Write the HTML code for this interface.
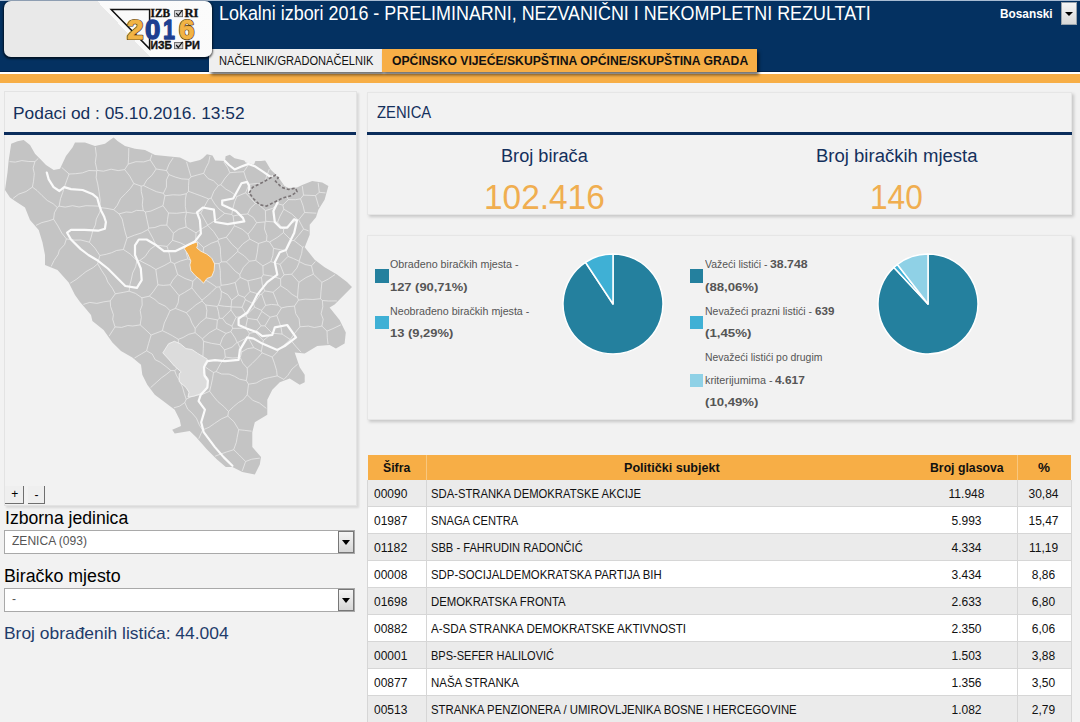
<!DOCTYPE html>
<html><head><meta charset="utf-8"><title>Lokalni izbori 2016</title>
<style>
html,body{margin:0;padding:0;}
body{width:1080px;height:722px;overflow:hidden;background:#f2f2f2;font-family:"Liberation Sans", sans-serif;position:relative;}
</style></head><body>
<div style="position:absolute;left:0px;top:0px;width:1080px;height:72px;background:#043161;"></div><div style="position:absolute;left:0px;top:71px;width:1080px;height:1px;background:#022145;"></div><div style="position:absolute;left:0px;top:0px;width:1080px;height:1px;background:#a9bcd3;"></div><div style="position:absolute;left:0px;top:72px;width:1080px;height:2px;background:#ffffff;"></div><div style="position:absolute;left:0px;top:74px;width:1080px;height:9px;background:#f7ae46;"></div><div style="position:absolute;top:3.07px;font-family:'Liberation Sans',sans-serif;font-size:20px;line-height:20px;color:#ffffff;font-weight:400;white-space:nowrap;left:219.4px;transform-origin:0 0;transform:translateX(0.00px) scaleX(0.8957);">Lokalni izbori 2016 - PRELIMINARNI, NEZVANIČNI I NEKOMPLETNI REZULTATI</div><div style="position:absolute;top:7.84px;font-family:'Liberation Sans',sans-serif;font-size:12px;line-height:12px;color:#ffffff;font-weight:700;white-space:nowrap;left:1000.4px;transform-origin:0 0;transform:translateX(0.00px) scaleX(0.9858);">Bosanski</div><div style="position:absolute;left:1061px;top:2px;width:14px;height:21px;border:1px solid #9aa4ad;background:linear-gradient(#f6f6f6,#d8d8d8);"></div><div style="position:absolute;left:1065px;top:12px;width:0;height:0;border-left:4px solid transparent;border-right:4px solid transparent;border-top:4px solid #000;"></div><div style="position:absolute;left:209px;top:49px;width:173px;height:23px;background:#efefef;box-shadow:2px 3px 3px rgba(0,0,0,0.55);"></div><div style="position:absolute;left:382px;top:49px;width:375px;height:23px;background:#f7ae46;box-shadow:2px 3px 3px rgba(0,0,0,0.55);"></div><div style="position:absolute;left:4px;top:1px;width:208px;height:56px;border-radius:7px;background:linear-gradient(46.6deg,#e9e9e9 0,#e9e9e9 56%,#fafafa 56%,#fbfbfb 100%);box-shadow:0 1px 2px 0.5px rgba(0,0,0,0.6);"></div><svg style="position:absolute;left:100px;top:0px" width="110" height="57" viewBox="100 0 110 57">
<path d="M111.2,9.4 L149.6,9.4 L149.6,48.8 Z" fill="none" stroke="#111" stroke-width="1.5" stroke-linejoin="miter"/>
<g stroke="#111" stroke-width="0.35">
<text x="150.6" y="16.8" font-family="Liberation Serif" font-weight="700" font-size="12.4" fill="#111" textLength="19.6" lengthAdjust="spacingAndGlyphs">IZB</text>
<text x="184.4" y="16.8" font-family="Liberation Serif" font-weight="700" font-size="12.4" fill="#111" textLength="14" lengthAdjust="spacingAndGlyphs">RI</text>
<text x="150.6" y="48.9" font-family="Liberation Sans" font-weight="700" font-size="10" fill="#111" textLength="21.4" lengthAdjust="spacingAndGlyphs">ИЗБ</text>
<text x="184.8" y="48.9" font-family="Liberation Sans" font-weight="700" font-size="10" fill="#111" textLength="15.2" lengthAdjust="spacingAndGlyphs">РИ</text>
</g>
<rect x="174.6" y="10.6" width="8" height="6.1" fill="#d4d4d4" stroke="#555" stroke-width="0.8"/>
<path d="M176.2,13.2 L178.3,15.6 L182.4,10" fill="none" stroke="#111" stroke-width="1.2"/>
<rect x="174.6" y="42.4" width="8.2" height="6.3" fill="#d4d4d4" stroke="#555" stroke-width="0.8"/>
<path d="M176.2,45 L178.3,47.6 L182.6,41.9" fill="none" stroke="#111" stroke-width="1.2"/>
<g font-family="Liberation Sans" font-weight="700" font-size="28.5" stroke-linejoin="round">
<text x="126.9" y="39" fill="#4a3a18" stroke="#4a3a18" stroke-width="2.2" textLength="16.4" lengthAdjust="spacingAndGlyphs">2</text>
<text x="178.9" y="39" fill="#4a3a18" stroke="#4a3a18" stroke-width="2.2" textLength="15.4" lengthAdjust="spacingAndGlyphs">6</text>
<text x="126.9" y="39" fill="#f2b445" stroke="#f2b445" stroke-width="0.9" textLength="16.4" lengthAdjust="spacingAndGlyphs">2</text>
<text x="145.1" y="39" fill="#1d3f91" stroke="#1d3f91" stroke-width="1.3" textLength="15.4" lengthAdjust="spacingAndGlyphs">0</text>
<text x="163.1" y="39" fill="#1d3f91" stroke="#1d3f91" stroke-width="1.3" textLength="12" lengthAdjust="spacingAndGlyphs">1</text>
<text x="178.9" y="39" fill="#f2b445" stroke="#f2b445" stroke-width="0.9" textLength="15.4" lengthAdjust="spacingAndGlyphs">6</text>
</g>
</svg>
<div style="position:absolute;top:54.94px;font-family:'Liberation Sans',sans-serif;font-size:12px;line-height:12px;color:#111;font-weight:400;white-space:nowrap;left:218.9px;transform-origin:0 0;transform:translateX(0.00px) scaleX(0.9225);">NAČELNIK/GRADONAČELNIK</div><div style="position:absolute;top:54.94px;font-family:'Liberation Sans',sans-serif;font-size:12px;line-height:12px;color:#111;font-weight:700;white-space:nowrap;left:391.7px;transform-origin:0 0;transform:translateX(0.00px) scaleX(1.0143);">OPĆINSKO VIJEĆE/SKUPŠTINA OPĆINE/SKUPŠTINA GRADA</div><div style="position:absolute;left:4px;top:91px;width:351px;height:413px;background:#f2f2f2;border:1px solid #e3e3e3;box-shadow:2px 2px 2px rgba(0,0,0,0.10);"></div><div style="position:absolute;left:4px;top:132px;width:352px;height:3px;background:#0b2d5c;"></div><div style="position:absolute;top:105.01px;font-family:'Liberation Sans',sans-serif;font-size:17px;line-height:17px;color:#14305c;font-weight:400;white-space:nowrap;left:13.3px;transform-origin:0 0;transform:translateX(0.00px) scaleX(1.0209);">Podaci od : 05.10.2016. 13:52</div><svg style="position:absolute;left:0;top:136px" width="360" height="346" viewBox="0 136 360 346"><polygon points="11.2,143.7 17.5,141.2 23.7,140.0 30.0,145.0 35.0,153.7 40.0,158.7 46.0,165.0 53.7,170.0 60.0,168.7 66.0,156.0 72.5,147.5 75.0,142.5 85.0,142.5 95.0,146.0 105.0,143.7 110.0,140.0 113.7,137.5 117.5,141.0 125.0,146.0 135.0,148.7 145.0,150.0 155.0,155.0 165.0,156.0 180.0,157.4 190.0,162.4 200.0,160.0 202.8,158.3 206.9,154.2 212.5,155.5 215.2,160.4 225.0,161.0 225.6,156.2 229.8,154.8 234.6,158.3 244.3,160.4 245.7,162.5 254.0,164.5 255.4,161.0 261.0,161.0 265.1,160.4 266.5,162.5 270.6,169.4 275.5,174.2 279.6,179.0 284.5,186.0 288.6,188.1 297.0,187.4 302.2,185.0 312.2,181.0 322.2,182.4 328.4,186.0 324.6,199.8 318.4,209.8 316.0,217.3 309.7,224.8 309.7,234.8 304.7,247.2 314.7,259.7 324.6,267.2 337.0,274.6 347.0,282.1 352.0,287.1 344.6,294.6 334.6,304.6 329.6,307.5 339.6,320.0 345.8,332.4 344.6,343.6 335.9,348.6 329.6,345.0 317.2,346.0 304.7,353.6 294.7,352.4 299.7,367.3 304.7,374.8 304.7,382.3 299.7,384.8 289.7,378.5 279.8,382.3 272.3,389.8 267.3,399.8 267.3,414.7 254.8,422.2 252.3,432.2 252.3,447.0 261.0,457.0 259.8,464.6 254.8,474.5 242.3,472.0 232.4,467.0 225.8,467.0 217.0,459.6 207.0,449.6 196.0,437.0 189.7,431.0 174.7,433.4 172.2,429.7 181.0,426.0 179.7,419.7 174.7,409.7 164.8,402.2 154.8,394.8 147.3,384.8 142.3,374.8 141.0,364.8 132.3,357.4 121.0,351.0 112.4,342.4 103.6,330.0 92.4,321.0 91.0,315.0 86.0,309.0 80.0,302.0 75.0,295.0 68.7,282.5 57.5,270.0 45.0,265.0 45.0,255.0 42.5,242.5 38.7,230.0 30.0,220.0 25.0,207.5 15.0,201.0 10.0,197.5 5.0,190.0 7.5,172.5 8.7,160.0" fill="#c4c4c4"/><path d="M173.9,407.8 L179.6,406.2 L184.8,402.5 M198.8,438.7 L202.5,430.0 M202.5,430.0 L199.3,424.9 L196.4,418.2 L191.9,412.9 L187.7,409.2 L184.8,402.5 M174.7,370.6 L170.9,370.6 M150.6,387.6 L156.2,382.6 L161.4,377.9 L166.8,374.0 L170.9,370.6 M174.7,370.6 L176.4,375.3 L180.3,381.8 L182.7,387.8 L184.2,393.3 L186.2,399.2 M186.2,399.2 L184.8,402.5 M242.3,470.9 L245.6,461.5 M215.1,456.2 L221.7,453.7 L226.8,451.9 L233.7,449.7 M245.6,461.5 L239.1,454.9 L233.7,449.7 M95.3,147.0 L96.3,155.1 L95.3,162.4 L97.0,170.4 M124.7,169.6 L118.2,170.6 L111.1,169.2 L103.5,171.2 L97.0,170.4 M124.7,169.6 L128.2,164.1 M128.2,164.1 L128.6,156.2 L128.8,148.1 M9.5,161.6 L15.3,162.1 L21.8,160.6 L28.8,161.5 L34.9,161.6 M13.1,198.4 L18.6,194.2 L26.1,191.5 L32.4,187.1 M34.9,161.6 L33.1,168.1 L34.3,173.6 L33.5,181.4 L32.4,187.1 M34.9,161.6 L38.3,158.4 M97.0,170.4 L96.7,170.8 M96.7,170.8 L89.0,170.5 L82.3,172.9 L75.7,173.7 L69.1,174.0 M61.7,167.4 L69.1,174.0 M115.3,293.8 L112.3,288.2 L107.8,282.0 L105.8,276.8 L101.7,270.6 L97.7,263.8 M110.2,300.9 L115.3,293.8 M110.2,300.9 L103.9,301.8 L96.9,303.4 L89.8,302.4 L83.4,304.4 M70.2,283.2 L76.3,279.4 L82.3,274.6 L85.9,271.7 L93.3,267.5 L97.7,263.8 M177.6,274.5 L172.8,280.1 L170.2,284.8 M177.6,274.5 L185.0,278.5 L192.9,281.3 M170.2,284.8 L173.7,289.0 L179.0,295.6 M179.0,295.6 L184.4,292.5 L191.9,287.9 M192.9,281.3 L191.9,287.9 M170.0,310.7 L165.7,306.3 L158.6,303.0 L155.0,299.6 L149.4,296.2 M170.0,310.7 L175.4,308.4 M175.4,308.4 L178.1,302.9 L179.0,295.6 M157.9,284.8 L163.3,285.4 L170.2,284.8 M157.9,284.8 L153.3,291.5 L149.4,296.2 M318.2,182.8 L319.3,192.3 M319.3,192.3 L325.5,192.9 M322.4,300.5 L320.5,298.7 M321.9,282.3 L321.0,291.3 L320.5,298.7 M336.9,300.9 L328.6,301.0 L322.4,300.5 M321.9,282.3 L328.2,279.1 L335.0,274.6 M146.6,350.8 L148.6,343.5 L151.1,335.0 M146.6,350.8 L141.4,353.9 L134.5,358.0 M109.1,336.1 L115.0,326.9 M115.0,326.9 L121.7,327.4 L127.8,325.5 L132.8,326.0 L140.2,324.9 M140.2,324.9 L145.9,330.0 L151.1,335.0 M162.4,330.7 L155.9,333.2 L151.1,335.0 M178.3,339.3 L172.3,335.7 L167.8,333.3 L162.4,330.7 M174.7,370.6 L178.1,367.4 M170.9,370.6 L166.8,367.2 L160.3,362.2 L155.2,359.7 L152.2,354.0 L146.6,350.8 M178.1,367.4 L178.2,361.4 L178.5,352.2 L178.5,346.2 L178.3,339.3 M110.2,300.9 L110.6,306.5 L113.4,314.7 L112.7,319.3 L115.0,326.9 M129.1,291.2 L123.2,292.4 L115.3,293.8 M141.9,297.8 L142.2,305.1 L140.2,310.3 L141.3,317.4 L140.2,324.9 M129.1,291.2 L135.5,293.4 L141.9,297.8 M170.0,310.7 L167.5,316.3 L164.3,323.1 L162.4,330.7 M141.9,297.8 L149.4,296.2 M202.5,430.0 L209.0,427.3 L214.6,423.4 L221.5,418.8 L227.8,416.1 M233.7,449.7 L236.3,442.4 L237.2,437.3 L238.7,429.7 M227.8,416.1 L234.0,421.8 L238.7,429.7 M128.2,164.1 L135.8,161.7 L143.8,161.9 L150.2,159.9 M150.2,159.9 L151.9,154.6 M191.0,176.8 L197.3,175.0 L203.7,173.3 M191.0,176.8 L188.5,168.5 L186.5,161.8 M210.0,156.0 L208.7,162.5 L205.7,168.3 L203.7,173.3 M218.3,185.5 L213.4,180.7 L208.1,178.6 L203.7,173.3 M218.3,185.5 L220.8,184.7 M223.8,161.9 L227.8,167.9 L229.8,172.7 M229.8,172.7 L225.2,178.0 L220.8,184.7 M168.5,213.0 L167.5,219.4 L166.8,225.1 M168.5,213.0 L176.7,213.3 L186.3,212.1 M186.1,227.0 L178.6,229.3 L173.4,233.2 M186.1,227.0 L185.2,218.5 L186.5,212.3 M173.4,233.2 L166.8,225.1 M186.5,212.3 L186.3,212.1 M186.3,193.7 L185.3,199.9 L185.3,206.6 L186.3,212.1 M186.3,193.7 L180.2,195.1 L172.8,194.8 L164.9,195.8 M168.5,213.0 L163.0,205.7 M163.0,205.7 L164.9,195.8 M188.5,191.3 L194.2,193.4 L201.8,196.2 L208.6,198.9 M189.0,179.3 L188.5,185.6 L188.5,191.3 M191.0,176.8 L189.0,179.3 M218.3,185.5 L213.8,191.5 L211.2,198.1 M211.2,198.1 L208.6,198.9 M188.5,191.3 L186.3,193.7 M186.5,212.3 L193.1,213.3 L200.8,213.1 M208.6,198.9 L204.8,205.8 L200.8,213.1 M186.2,399.2 L190.9,396.9 L197.5,395.2 L203.1,394.1 L209.6,391.2 M227.8,416.1 L228.5,411.5 M209.6,391.2 L213.9,396.9 L217.9,401.6 L223.8,406.5 L228.5,411.5 M97.7,263.8 L99.8,255.5 M99.8,255.5 L106.1,254.3 L111.7,252.7 L116.6,250.5 L123.4,249.5 M129.1,291.2 L130.0,284.2 L131.4,279.2 L132.6,273.1 L135.7,266.7 L136.9,260.6 M123.4,249.5 L130.2,254.0 L136.9,260.6 M89.4,242.2 L80.8,240.0 L74.8,240.1 L66.4,238.9 M89.4,242.2 L91.1,237.3 L92.8,230.6 L95.4,224.8 L96.3,219.1 L99.7,212.3 L101.2,207.7 M99.9,206.2 L101.2,207.7 M99.9,206.2 L93.0,205.9 L85.9,205.7 L79.1,207.0 L72.6,205.7 L65.2,207.1 L59.1,206.1 M66.4,238.9 L61.8,233.1 L57.9,225.9 L53.6,219.2 M53.6,219.2 L54.4,212.8 L57.3,207.5 M59.1,206.1 L57.3,207.5 M51.2,266.4 L54.1,260.4 L58.1,254.5 L59.4,250.1 L64.5,244.7 L66.4,238.9 M99.8,255.5 L95.0,248.2 L89.4,242.2 M96.7,170.8 L96.2,177.8 L97.7,183.9 L99.0,191.7 L100.2,200.1 L99.9,206.2 M133.8,183.5 L129.7,176.0 L124.7,169.6 M133.8,183.5 L130.2,188.7 L125.5,193.6 L120.6,198.5 L117.1,205.5 L113.7,209.7 M113.7,209.7 L107.0,208.4 L101.2,207.7 M69.1,174.0 L66.6,180.8 L64.0,188.1 L62.7,192.6 L60.5,198.7 L59.1,206.1 M36.0,225.4 L41.8,222.6 L48.7,220.9 L53.6,219.2 M32.4,187.1 L37.0,190.5 L41.9,195.4 L47.3,200.5 L53.1,203.7 L57.3,207.5 M186.3,312.7 L192.4,307.9 L196.1,304.7 L202.0,301.0 M175.4,308.4 L186.3,312.7 M191.9,287.9 L196.9,294.2 L202.0,300.2 M202.0,300.2 L202.0,301.0 M195.7,239.9 L186.8,246.2 M196.0,232.8 L195.7,239.9 M196.0,232.8 L186.1,227.0 M173.4,233.2 L172.5,240.3 M186.8,246.2 L180.6,242.9 L172.5,240.3 M192.5,260.8 L196.8,257.4 L203.0,254.7 M192.5,260.8 L193.9,269.7 L197.7,276.6 M197.7,276.6 L200.4,276.3 M200.4,276.3 L205.6,270.9 L211.1,267.1 L215.0,263.6 M215.0,263.6 L208.7,260.3 L203.0,254.7 M203.6,247.6 L195.7,239.9 M187.8,258.9 L186.3,252.9 L186.8,246.2 M187.8,258.9 L192.5,260.8 M203.6,247.6 L203.0,254.7 M187.8,258.9 L180.4,261.0 L174.4,263.7 M177.6,274.5 L174.4,263.7 M192.9,281.3 L197.7,276.6 M216.5,287.1 L211.3,292.3 L207.9,295.4 L202.0,300.2 M216.5,287.1 L210.1,282.7 L205.4,279.9 L200.4,276.3 M340.9,324.8 L333.0,328.6 L327.0,331.1 M322.4,300.5 L322.8,306.8 L321.1,313.8 L323.2,319.2 L321.9,326.1 M327.0,331.1 L321.9,326.1 M297.5,297.5 L298.5,300.1 M320.5,298.7 L312.9,299.5 L305.3,299.1 L298.5,300.1 M321.9,282.3 L313.4,274.2 M297.5,297.5 L298.1,289.3 L298.9,282.3 M313.4,274.2 L306.1,277.5 L298.9,282.3 M327.0,331.1 L327.3,337.9 L328.0,344.1 M245.6,461.5 L251.7,459.2 L259.8,458.1 M156.2,169.0 L166.5,170.6 M156.2,169.0 L151.8,175.4 L146.9,179.8 L143.6,185.6 M143.6,185.6 L149.5,188.5 L156.4,191.7 L163.4,193.3 M163.4,193.3 L166.4,187.1 L166.4,180.1 L168.9,174.6 M168.9,174.6 L166.5,170.6 M150.2,159.9 L156.2,169.0 M173.2,157.8 L169.1,164.0 L166.5,170.6 M141.1,186.1 L143.6,185.6 M133.8,183.5 L141.1,186.1 M164.9,195.8 L163.4,193.3 M189.0,179.3 L181.8,178.9 L175.4,177.1 L168.9,174.6 M291.7,240.6 L286.0,250.8 M291.7,240.6 L283.5,232.6 M283.5,232.6 L277.5,237.3 L269.6,242.0 M286.0,250.8 L280.6,249.8 L273.5,248.3 M269.6,242.0 L273.5,248.3 M319.3,192.3 L315.5,195.6 M315.5,195.6 L303.5,195.1 M302.3,186.1 L303.5,195.1 M229.8,172.7 L237.7,172.1 L243.8,171.7 M248.7,164.3 L243.8,171.7 M248.5,384.2 L247.2,394.8 M248.5,384.2 L256.2,383.0 L263.3,379.0 L269.6,377.5 L277.2,375.9 M247.2,394.8 L252.9,400.4 L259.6,403.1 L266.3,408.4 M277.2,375.9 L283.9,379.4 M283.9,379.4 L284.0,379.6 M238.7,429.7 L244.3,430.3 L251.5,431.2 M228.5,411.5 L233.5,406.7 L238.5,402.5 L243.2,399.8 L247.2,394.8 M297.6,364.2 L292.0,369.0 L287.8,375.4 L283.9,379.4 M247.2,368.1 L242.8,363.2 L240.2,357.6 M247.2,368.1 L252.3,363.3 L257.7,357.9 L262.1,352.9 M253.8,347.7 L247.4,348.7 L241.8,351.9 M253.8,347.7 L261.3,351.4 M240.2,357.6 L241.8,351.9 M262.1,352.9 L261.3,351.4 M272.2,357.0 L274.4,363.2 L276.6,370.5 L277.2,375.9 M246.3,380.6 L248.5,384.2 M246.3,380.6 L247.5,373.7 L247.2,368.1 M272.2,357.0 L262.1,352.9 M119.1,213.9 L122.2,219.1 L123.8,226.5 L125.4,233.0 L127.0,238.1 M119.1,213.9 L126.1,212.0 L131.8,212.4 L136.4,210.4 L143.3,210.7 M127.0,238.1 L134.4,235.2 L141.3,233.0 L148.1,229.5 M143.3,210.7 L145.4,212.0 M145.4,212.0 L146.9,219.4 L148.8,228.1 M148.8,228.1 L148.1,229.5 M123.4,249.5 L127.0,238.1 M113.7,209.7 L119.1,213.9 M141.1,186.1 L141.3,191.7 L142.9,198.5 L142.3,204.8 L143.3,210.7 M163.0,205.7 L156.0,208.8 L150.8,211.1 L145.4,212.0 M166.8,225.1 L160.8,225.3 L154.9,227.5 L148.8,228.1 M155.8,269.5 L164.1,265.6 L170.8,261.9 M155.8,269.5 L150.1,265.9 L144.0,262.8 L139.7,260.5 M139.7,260.5 L145.1,256.6 L149.9,249.5 L155.9,245.2 M170.8,261.9 L169.6,255.0 L167.1,246.4 M155.9,245.2 L167.1,246.4 M174.4,263.7 L170.8,261.9 M157.9,284.8 L156.7,276.0 L155.8,269.5 M136.9,260.6 L139.7,260.5 M148.1,229.5 L152.9,238.4 L155.9,245.2 M172.5,240.3 L167.1,246.4 M245.6,327.8 L249.4,333.3 M245.6,327.8 L239.1,328.3 L232.6,328.3 M248.0,337.3 L237.7,342.5 M248.0,337.3 L249.4,333.3 M230.9,331.6 L232.6,328.3 M230.9,331.6 L235.1,337.9 L237.1,342.3 M237.1,342.3 L237.7,342.5 M241.8,351.9 L237.7,342.5 M253.8,347.7 L248.0,337.3 M263.3,340.5 L261.3,351.4 M263.3,340.5 L255.2,332.2 M255.2,332.2 L249.4,333.3 M240.2,357.6 L232.5,358.0 L225.3,357.1 M237.1,342.3 L232.0,347.2 L224.5,349.9 M224.5,349.9 L225.3,357.1 M246.3,380.6 L239.5,379.2 L234.7,376.4 L229.1,374.1 L221.6,374.0 L216.2,371.6 M225.3,357.1 L220.7,363.4 L216.2,371.6 M209.6,391.2 L211.1,385.3 L212.5,378.7 L213.5,372.5 M178.1,367.4 L186.5,366.8 L193.6,364.8 L200.8,363.6 M200.8,363.6 L208.4,369.2 L213.5,372.5 M213.5,372.5 L216.2,371.6 M186.3,312.7 L189.8,317.4 L191.9,323.0 L195.2,328.6 M205.8,305.0 L202.0,301.0 M205.8,305.0 L206.9,310.5 L206.1,317.8 M206.1,317.8 L199.9,322.7 L195.2,328.6 M178.3,339.3 L183.1,337.5 L188.7,334.3 L195.1,332.7 M195.1,332.7 L195.2,328.6 M215.0,263.6 L219.1,263.5 M219.6,286.9 L216.5,287.1 M219.6,286.9 L221.1,285.3 M219.1,263.5 L220.3,270.6 L220.4,277.9 L221.1,285.3 M203.6,247.6 L211.3,243.2 L218.0,240.8 M219.1,263.5 L221.4,261.9 M218.0,240.8 L220.3,247.3 L220.6,254.8 L221.4,261.9 M249.4,261.2 L243.5,267.3 L239.8,274.5 M239.8,274.5 L235.3,271.3 L230.0,265.5 L226.3,261.8 M249.4,261.2 L244.4,256.0 L237.7,251.5 M226.3,261.8 L231.1,257.6 L237.7,251.5 M258.4,243.5 L257.2,252.8 L255.7,260.4 M258.4,243.5 L249.8,239.1 M249.8,239.1 L243.1,243.7 L237.9,249.6 M255.7,260.4 L249.4,261.2 M237.7,251.5 L237.9,249.6 M211.2,198.1 L214.7,203.9 L219.0,209.0 L224.7,213.3 M200.8,213.1 L204.9,220.2 L207.7,225.2 M224.7,213.3 L218.7,218.4 L214.3,221.0 L207.7,225.2 M220.8,184.7 L225.8,189.1 L230.9,191.9 L236.9,196.5 M236.9,196.5 L234.7,201.6 L232.7,209.1 L231.8,214.5 M224.7,213.3 L231.8,214.5 M196.0,232.8 L202.6,228.3 L207.7,225.4 M218.0,240.8 L218.7,239.3 M207.7,225.4 L213.5,231.4 L218.7,239.3 M207.7,225.4 L207.7,225.2 M237.9,249.6 L232.1,244.4 L226.3,237.2 M221.4,261.9 L226.3,261.8 M218.7,239.3 L226.3,237.2 M299.9,326.8 L294.1,334.0 L290.3,339.5 M299.9,326.8 L299.1,318.9 L295.7,313.6 L294.5,306.1 M294.5,306.1 L287.2,306.7 L281.5,307.9 M282.1,334.1 L290.2,339.5 M282.1,334.1 L281.0,327.2 L279.3,322.2 L276.8,315.6 M276.8,315.6 L281.5,307.9 M290.2,339.5 L290.3,339.5 M301.1,352.2 L295.9,346.5 L290.3,339.5 M321.9,326.1 L314.4,327.5 L308.3,326.1 L299.9,326.8 M298.5,300.1 L294.5,306.1 M272.2,357.0 L275.9,353.5 L280.3,348.0 L286.0,343.5 L290.2,339.5 M272.2,333.2 L263.3,340.5 M272.2,333.2 L282.1,334.1 M288.0,256.4 L286.0,250.8 M288.0,256.4 L293.6,258.6 L299.1,261.2 M294.0,240.5 L302.5,247.1 M294.0,240.5 L291.7,240.6 M302.5,247.1 L301.7,253.3 L299.1,261.2 M313.4,274.2 L311.5,265.8 M291.7,274.2 L296.8,268.1 L299.5,261.7 M298.9,282.3 L291.7,274.2 M311.5,265.8 L305.1,264.5 L299.5,261.7 M280.7,285.8 L273.1,292.3 M297.5,297.5 L292.1,294.4 L287.2,289.9 L280.7,285.8 M281.5,307.9 L278.1,305.1 M278.1,305.1 L276.1,299.7 L273.1,292.3 M316.3,213.2 L304.6,212.5 M303.6,229.0 L308.7,230.9 M303.6,229.0 L298.7,219.8 M298.7,219.8 L304.6,212.5 M315.5,195.6 L318.9,207.1 M303.5,195.1 L300.5,198.8 M300.5,198.8 L303.1,205.9 L304.6,212.5 M311.5,265.8 L315.4,261.5 M302.5,247.1 L303.8,246.7 M294.0,240.5 L298.5,235.3 L303.6,229.0 M283.5,229.5 L290.7,223.5 L298.0,219.8 M298.0,219.8 L298.7,219.8 M283.5,232.6 L283.5,229.5 M299.1,261.2 L299.5,261.7 M300.5,198.8 L295.4,199.7 L288.4,199.6 M288.4,199.6 L285.7,194.6 L284.8,187.3 M249.0,184.3 L257.3,183.5 L264.1,184.6 M249.0,184.3 L245.6,192.8 M245.6,192.8 L251.1,198.7 L255.4,203.5 M264.1,184.6 L268.5,190.4 M257.7,203.6 L255.4,203.5 M257.7,203.6 L263.2,198.2 L268.5,191.0 M268.5,190.4 L268.5,191.0 M269.3,169.1 L266.2,177.5 L264.1,184.6 M243.8,171.7 L245.9,178.2 L249.0,184.3 M236.9,196.5 L245.6,192.8 M282.5,184.9 L276.3,187.5 L268.5,190.4 M226.0,333.4 L216.6,328.6 M226.0,333.4 L222.5,338.0 L220.1,344.7 M216.6,328.6 L209.2,332.8 L202.4,338.8 M220.1,344.7 L211.4,343.3 L203.6,341.4 M203.6,341.4 L202.4,338.8 M230.9,331.6 L226.0,333.4 M224.5,349.9 L220.1,344.7 M206.1,317.8 L217.4,319.9 M217.4,319.9 L216.6,328.6 M195.1,332.7 L202.4,338.8 M200.8,363.6 L202.9,356.1 L203.3,348.8 L203.6,341.4 M205.8,305.0 L216.9,306.4 M217.4,319.9 L219.4,318.3 M219.4,318.3 L218.4,311.5 L216.9,306.4 M231.7,300.2 L231.1,306.7 M221.3,291.4 L227.7,294.6 L231.7,300.2 M221.3,291.4 L221.0,297.6 L218.4,305.3 M231.1,306.7 L224.6,306.3 L218.4,305.3 M219.6,286.9 L221.3,291.4 M216.9,306.4 L218.4,305.3 M262.9,265.9 L263.2,274.7 M262.9,265.9 L270.8,261.6 M263.2,274.7 L272.7,276.3 L280.6,278.9 M270.8,261.6 L280.1,264.4 M280.1,264.4 L284.1,274.8 M284.1,274.8 L280.6,278.9 M273.5,248.3 L272.9,255.3 L270.8,261.6 M266.5,241.0 L269.6,242.0 M258.4,243.5 L266.5,241.0 M255.7,260.4 L262.9,265.9 M288.0,256.4 L280.1,264.4 M291.7,274.2 L284.1,274.8 M280.7,285.8 L280.6,278.9 M273.1,292.3 L264.7,290.9 M263.2,274.7 L261.5,277.5 M261.5,277.5 L262.2,284.1 L264.7,290.9 M265.6,305.4 L271.6,304.4 L278.1,305.1 M265.6,305.4 L261.7,294.1 M261.7,294.1 L264.7,290.9 M234.4,225.8 L233.1,216.0 M234.4,225.8 L242.3,229.3 L248.0,234.2 M233.1,216.0 L240.3,214.6 L247.6,214.0 M247.6,214.0 L253.3,217.5 L256.6,222.7 M256.6,222.7 L252.4,228.9 L248.0,234.2 M231.8,214.5 L233.1,216.0 M226.3,237.2 L230.4,232.0 L234.4,225.8 M249.8,239.1 L248.0,234.2 M255.4,203.5 L250.4,208.2 L247.6,214.0 M265.1,221.9 L256.6,222.7 M266.5,241.0 L266.9,235.5 L264.5,229.0 L265.1,221.9 M270.1,317.2 L261.8,311.4 M270.1,317.2 L264.9,325.9 M261.8,311.4 L257.2,319.8 M257.2,319.8 L261.0,325.8 M264.9,325.9 L261.0,325.8 M265.6,305.4 L261.6,310.4 M276.8,315.6 L270.1,317.2 M261.6,310.4 L261.8,311.4 M272.2,333.2 L264.9,325.9 M261.6,310.4 L254.5,307.2 M254.5,307.2 L246.4,314.9 M246.3,315.9 L246.4,314.9 M247.6,318.4 L246.3,315.9 M247.6,318.4 L257.2,319.8 M245.6,327.8 L247.6,318.4 M255.2,332.2 L261.0,325.8 M283.8,209.2 L279.9,216.3 L277.6,222.2 M283.8,209.2 L282.9,205.1 M282.9,205.1 L277.9,203.8 M277.9,203.8 L272.8,208.3 L265.4,210.6 M277.6,222.2 L265.7,221.3 M265.4,210.6 L265.7,221.3 M283.5,229.5 L277.6,222.2 M298.0,219.8 L291.6,213.8 L283.8,209.2 M288.4,199.6 L282.9,205.1 M268.5,191.0 L273.1,197.1 L277.9,203.8 M257.7,203.6 L265.4,210.6 M265.1,221.9 L265.7,221.3 M232.0,326.1 L226.1,323.2 L222.5,318.3 M232.0,326.1 L236.0,317.3 M222.5,318.3 L230.9,310.0 M236.0,317.3 L230.9,310.0 M232.6,328.3 L232.0,326.1 M219.4,318.3 L222.5,318.3 M246.3,315.9 L236.0,317.3 M231.2,306.9 L231.1,306.7 M231.2,306.9 L230.9,310.0 M242.1,307.3 L231.2,306.9 M242.1,307.3 L246.4,314.9 M242.1,307.3 L245.3,299.7 M254.5,307.2 L253.6,303.9 M253.6,303.9 L245.3,299.7 M261.7,294.1 L260.3,294.5 M253.6,303.9 L260.3,294.5 M247.9,280.8 L250.0,291.5 M247.9,280.8 L240.1,277.4 M235.2,282.5 L240.1,277.4 M235.2,282.5 L237.0,289.9 L238.4,295.0 M250.0,291.5 L244.5,297.4 M238.4,295.0 L244.5,297.4 M261.5,277.5 L255.9,279.0 L247.9,280.8 M260.3,294.5 L250.0,291.5 M239.8,274.5 L240.1,277.4 M221.1,285.3 L228.1,284.4 L235.2,282.5 M231.7,300.2 L238.4,295.0 M245.3,299.7 L244.5,297.4" fill="none" stroke="#ededed" stroke-width="0.8" stroke-opacity="0.9"/><polygon points="162.8,352.9 168.6,343.7 174.4,341.3 180.2,343.7 186.0,348.6 191.9,349.5 197.7,353.4 207.4,359.2 204.5,364.1 203.5,372.8 207.9,378.6 207.4,386.4 204.5,391.3 199.6,394.2 193.8,396.1 188.0,397.1 189.0,392.2 186.0,387.4 179.2,381.6 179.2,373.8 181.2,371.9 174.4,366.0 168.6,359.2" fill="#dcdcdc" stroke="#f4f4f4" stroke-width="0.8"/><polygon points="184.1,248.4 188.4,244.5 197.2,242.1 197.6,245.5 196.7,247.9 201.0,251.3 206.9,254.2 211.7,258.1 214.6,263.9 214.1,270.7 211.7,276.6 206.9,278.5 203.5,283.3 201.0,280.4 195.2,275.6 190.9,270.7 189.9,264.9 190.9,261.0 187.9,254.2" fill="#f5ad47" stroke="#f4f4f4" stroke-width="0.8"/><polyline points="46.8,172.6 48.7,179.4 53.6,187.1 59.4,191.0 64.2,187.1 71.0,189.1 82.6,190.0 92.3,193.9 97.2,197.8 99.1,204.6 101.0,210.4 104.0,216.2 105.9,222.0 104.9,228.8 98.1,230.7 84.6,229.8 71.0,229.8 67.1,232.7 71.0,239.5 80.7,249.1 88.4,255.0 98.1,260.8 107.8,268.5 117.5,278.2 125.3,286.0 136.9,287.9 141.7,280.2 140.8,268.5 135.0,255.0 135.0,245.3 138.8,239.5 146.6,239.5 156.3,245.3 164.0,251.1 175.7,251.1 183.4,247.2 195.0,241.4 200.9,233.6 199.9,220.1 197.0,212.3 202.8,207.5 213.9,209.6 215.2,222.0 227.7,224.1 244.3,221.3 242.9,217.9 236.0,211.0 222.2,204.7 222.2,200.6 233.2,198.5 241.5,183.2 247.1,181.9 249.2,186.0 249.2,192.9" fill="none" stroke="#fafafa" stroke-width="2.2" stroke-linejoin="round" stroke-linecap="round"/><polyline points="225.0,161.0 229.0,165.0 234.6,169.4 241.5,166.6 248.5,163.9 255.4,166.6 263.7,172.2 270.6,177.0 275.5,175.6" fill="none" stroke="#fafafa" stroke-width="2.2" stroke-linejoin="round" stroke-linecap="round"/><polyline points="277.6,202.6 273.4,211.0 274.8,222.0 280.3,227.6 287.3,227.6 294.2,219.3 297.0,220.6 294.2,233.1 288.6,244.2 285.9,250.0 279.8,252.2 274.8,262.2 277.3,274.6 267.3,282.1 257.3,294.6 252.0,305.0 247.3,312.5 238.6,318.7 238.6,325.0 247.3,328.7 257.3,332.4 262.3,336.2 272.3,335.0 274.8,327.4 287.2,325.0 296.0,337.4 284.7,346.0 277.3,349.9 262.3,343.6 253.6,338.6 247.3,337.4 239.9,349.9 238.6,359.9 224.9,361.1 215.0,360.2 207.4,361.2 204.0,367.0 204.5,375.7 207.9,380.6 207.4,387.4 200.6,395.1 198.6,401.0 201.2,404.7 204.9,409.7 201.2,422.2 203.7,432.2 214.9,447.1 223.6,457.1 232.4,465.8" fill="none" stroke="#fafafa" stroke-width="2.2" stroke-linejoin="round" stroke-linecap="round"/><polygon points="249.2,192.9 252.6,187.4 262.3,182.5 272.0,177.0 275.5,175.0 278.3,177.7 275.5,181.2 281.7,187.4 288.6,189.5 295.6,188.1 297.0,191.6 291.4,195.7 283.1,197.8 274.8,202.0 266.5,206.1 259.6,204.7 254.0,199.2" fill="#c4c4c4" stroke="#7a7476" stroke-width="1.6" stroke-dasharray="3,2"/></svg><div style="position:absolute;left:5px;top:486px;width:18px;height:17px;background:#efefef;border-right:1px solid #6f6f6f;border-bottom:1px solid #6f6f6f;"></div><div style="position:absolute;left:28px;top:486px;width:16px;height:17px;background:#efefef;border-right:1px solid #6f6f6f;border-bottom:1px solid #6f6f6f;"></div><div style="position:absolute;top:488.34px;font-family:'Liberation Sans',sans-serif;font-size:12px;line-height:12px;color:#000;font-weight:400;white-space:nowrap;left:11.3px;transform-origin:0 0;transform:translateX(0.00px) scaleX(1.0000);">+</div><div style="position:absolute;top:489.04px;font-family:'Liberation Sans',sans-serif;font-size:12px;line-height:12px;color:#000;font-weight:400;white-space:nowrap;left:34.6px;transform-origin:0 0;transform:translateX(0.00px) scaleX(1.0000);">-</div><div style="position:absolute;top:509.70px;font-family:'Liberation Sans',sans-serif;font-size:17.6px;line-height:17.6px;color:#000;font-weight:400;white-space:nowrap;left:5.2px;transform-origin:0 0;transform:translateX(0.00px) scaleX(0.9997);">Izborna jedinica</div><div style="position:absolute;left:4px;top:530px;width:349px;height:22px;background:#fff;border:1px solid #a9a9a9;"></div><div style="position:absolute;left:338px;top:531px;width:14px;height:20px;border:1px solid #777;background:linear-gradient(#f4f4f4,#d6d6d6);"></div><div style="position:absolute;left:342px;top:540px;width:0;height:0;border-left:4.5px solid transparent;border-right:4.5px solid transparent;border-top:5px solid #000;"></div><div style="position:absolute;top:535.44px;font-family:'Liberation Sans',sans-serif;font-size:12px;line-height:12px;color:#555;font-weight:400;white-space:nowrap;left:12px;transform-origin:0 0;transform:translateX(0.00px) scaleX(1.0040);">ZENICA (093)</div><div style="position:absolute;top:567.90px;font-family:'Liberation Sans',sans-serif;font-size:17.6px;line-height:17.6px;color:#000;font-weight:400;white-space:nowrap;left:4.4px;transform-origin:0 0;transform:translateX(0.00px) scaleX(1.0106);">Biračko mjesto</div><div style="position:absolute;left:4px;top:588px;width:349px;height:22px;background:#fff;border:1px solid #a9a9a9;"></div><div style="position:absolute;left:338px;top:589px;width:14px;height:20px;border:1px solid #777;background:linear-gradient(#f4f4f4,#d6d6d6);"></div><div style="position:absolute;left:342px;top:598px;width:0;height:0;border-left:4.5px solid transparent;border-right:4.5px solid transparent;border-top:5px solid #000;"></div><div style="position:absolute;top:593.34px;font-family:'Liberation Sans',sans-serif;font-size:12px;line-height:12px;color:#555;font-weight:400;white-space:nowrap;left:12px;transform-origin:0 0;transform:translateX(0.00px) scaleX(1.0000);">-</div><div style="position:absolute;top:624.71px;font-family:'Liberation Sans',sans-serif;font-size:17px;line-height:17px;color:#1f3c6b;font-weight:400;white-space:nowrap;left:4.4px;transform-origin:0 0;transform:translateX(0.00px) scaleX(1.0244);">Broj obrađenih listića: 44.004</div><div style="position:absolute;left:367px;top:92px;width:703px;height:121px;background:#f2f2f2;border:1px solid #e6e6e6;box-shadow:2px 2px 3px rgba(0,0,0,0.18);"></div><div style="position:absolute;left:367px;top:132px;width:705px;height:3px;background:#0b2d5c;"></div><div style="position:absolute;top:105.06px;font-family:'Liberation Sans',sans-serif;font-size:16px;line-height:16px;color:#14305c;font-weight:400;white-space:nowrap;left:376.5px;transform-origin:0 0;transform:translateX(0.00px) scaleX(0.9238);">ZENICA</div><div style="position:absolute;top:146.76px;font-family:'Liberation Sans',sans-serif;font-size:18px;line-height:18px;color:#14305c;font-weight:400;white-space:nowrap;left:500.6px;transform-origin:0 0;transform:translateX(0.00px) scaleX(1.0088);">Broj birača</div><div style="position:absolute;top:179.17px;font-family:'Liberation Sans',sans-serif;font-size:35px;line-height:35px;color:#f0ae50;font-weight:400;white-space:nowrap;left:483.9px;transform-origin:0 0;transform:translateX(0.00px) scaleX(0.9547);">102.416</div><div style="position:absolute;top:146.76px;font-family:'Liberation Sans',sans-serif;font-size:18px;line-height:18px;color:#14305c;font-weight:400;white-space:nowrap;left:815.5px;transform-origin:0 0;transform:translateX(0.00px) scaleX(1.0283);">Broj biračkih mjesta</div><div style="position:absolute;top:179.17px;font-family:'Liberation Sans',sans-serif;font-size:35px;line-height:35px;color:#f0ae50;font-weight:400;white-space:nowrap;left:870.4px;transform-origin:0 0;transform:translateX(0.00px) scaleX(0.9040);">140</div><div style="position:absolute;left:367px;top:235px;width:703px;height:183px;background:#f2f2f2;border:1px solid #e6e6e6;box-shadow:2px 2px 3px rgba(0,0,0,0.18);"></div><div style="position:absolute;left:375px;top:269px;width:14px;height:14px;background:#24809e;"></div><div style="position:absolute;left:375px;top:316px;width:14px;height:13px;background:#3fb0d5;"></div><div style="position:absolute;top:259.39px;font-family:'Liberation Sans',sans-serif;font-size:11px;line-height:11px;color:#555555;font-weight:400;white-space:nowrap;left:389.7px;transform-origin:0 0;transform:translateX(0.00px) scaleX(0.9738);">Obrađeno biračkih mjesta -</div><div style="position:absolute;top:282.39px;font-family:'Liberation Sans',sans-serif;font-size:11px;line-height:11px;color:#555555;font-weight:700;white-space:nowrap;left:390px;transform-origin:0 0;transform:translateX(0.00px) scaleX(1.1734);">127 (90,71%)</div><div style="position:absolute;top:306.19px;font-family:'Liberation Sans',sans-serif;font-size:11px;line-height:11px;color:#555555;font-weight:400;white-space:nowrap;left:389.7px;transform-origin:0 0;transform:translateX(0.00px) scaleX(0.9695);">Neobrađeno biračkih mjesta -</div><div style="position:absolute;top:328.19px;font-family:'Liberation Sans',sans-serif;font-size:11px;line-height:11px;color:#555555;font-weight:700;white-space:nowrap;left:390px;transform-origin:0 0;transform:translateX(0.00px) scaleX(1.1763);">13 (9,29%)</div><div style="position:absolute;left:690px;top:269px;width:13px;height:14px;background:#24809e;"></div><div style="position:absolute;left:690px;top:316px;width:13px;height:13px;background:#3fb0d5;"></div><div style="position:absolute;left:690px;top:374px;width:13px;height:13px;background:#8fd1e6;"></div><div style="position:absolute;top:259.19px;font-family:'Liberation Sans',sans-serif;font-size:11px;line-height:11px;color:#555555;font-weight:400;white-space:nowrap;left:704.9px;transform-origin:0 0;transform:translateX(0.00px) scaleX(0.9497);">Važeći listići -</div><div style="position:absolute;top:259.19px;font-family:'Liberation Sans',sans-serif;font-size:11px;line-height:11px;color:#555555;font-weight:700;white-space:nowrap;left:770px;transform-origin:0 0;transform:translateX(0.00px) scaleX(1.1172);">38.748</div><div style="position:absolute;top:281.69px;font-family:'Liberation Sans',sans-serif;font-size:11px;line-height:11px;color:#555555;font-weight:700;white-space:nowrap;left:705.2px;transform-origin:0 0;transform:translateX(0.00px) scaleX(1.1962);">(88,06%)</div><div style="position:absolute;top:306.29px;font-family:'Liberation Sans',sans-serif;font-size:11px;line-height:11px;color:#555555;font-weight:400;white-space:nowrap;left:704.5px;transform-origin:0 0;transform:translateX(0.00px) scaleX(0.9564);">Nevažeći prazni listići -</div><div style="position:absolute;top:306.29px;font-family:'Liberation Sans',sans-serif;font-size:11px;line-height:11px;color:#555555;font-weight:700;white-space:nowrap;left:815.4px;transform-origin:0 0;transform:translateX(0.00px) scaleX(1.0567);">639</div><div style="position:absolute;top:328.49px;font-family:'Liberation Sans',sans-serif;font-size:11px;line-height:11px;color:#555555;font-weight:700;white-space:nowrap;left:705.2px;transform-origin:0 0;transform:translateX(0.00px) scaleX(1.2068);">(1,45%)</div><div style="position:absolute;top:352.39px;font-family:'Liberation Sans',sans-serif;font-size:11px;line-height:11px;color:#555555;font-weight:400;white-space:nowrap;left:704.5px;transform-origin:0 0;transform:translateX(0.00px) scaleX(0.9459);">Nevažeći listići po drugim</div><div style="position:absolute;top:375.19px;font-family:'Liberation Sans',sans-serif;font-size:11px;line-height:11px;color:#555555;font-weight:400;white-space:nowrap;left:704.5px;transform-origin:0 0;transform:translateX(0.00px) scaleX(0.9774);">kriterijumima -</div><div style="position:absolute;top:375.19px;font-family:'Liberation Sans',sans-serif;font-size:11px;line-height:11px;color:#555555;font-weight:700;white-space:nowrap;left:775.2px;transform-origin:0 0;transform:translateX(0.00px) scaleX(1.0824);">4.617</div><div style="position:absolute;top:397.19px;font-family:'Liberation Sans',sans-serif;font-size:11px;line-height:11px;color:#555555;font-weight:700;white-space:nowrap;left:705.2px;transform-origin:0 0;transform:translateX(0.00px) scaleX(1.1962);">(10,49%)</div><svg style="position:absolute;left:559.7px;top:250.5px" width="106" height="106" viewBox="559.7 250.5 106 106"><path d="M612.7,303.5 L612.70,253.50 A50,50 0 1 1 585.14,261.78 Z" fill="#24809e" stroke="#fff" stroke-width="1.5" stroke-linejoin="round"/><path d="M612.7,303.5 L585.14,261.78 A50,50 0 0 1 612.70,253.50 Z" fill="#3fb0d5" stroke="#fff" stroke-width="1.5" stroke-linejoin="round"/></svg><svg style="position:absolute;left:874.5px;top:250.5px" width="106" height="106" viewBox="874.5 250.5 106 106"><path d="M927.5,303.5 L927.50,253.50 A50,50 0 1 1 893.41,266.92 Z" fill="#24809e" stroke="#fff" stroke-width="1.5" stroke-linejoin="round"/><path d="M927.5,303.5 L893.41,266.92 A50,50 0 0 1 896.88,263.97 Z" fill="#3fb0d5" stroke="#fff" stroke-width="1.5" stroke-linejoin="round"/><path d="M927.5,303.5 L896.88,263.97 A50,50 0 0 1 927.50,253.50 Z" fill="#8fd1e6" stroke="#fff" stroke-width="1.5" stroke-linejoin="round"/></svg><div style="position:absolute;left:368px;top:455px;width:703px;height:25px;background:#f7ae46;"></div><div style="position:absolute;left:426px;top:455px;width:1px;height:25px;background:#f8c77e;"></div><div style="position:absolute;left:1017px;top:455px;width:1px;height:25px;background:#f8c77e;"></div><div style="position:absolute;top:461.54px;font-family:'Liberation Sans',sans-serif;font-size:12px;line-height:12px;color:#111;font-weight:700;white-space:nowrap;left:383.3px;transform-origin:0 0;transform:translateX(0.00px) scaleX(1.0192);">Šifra</div><div style="position:absolute;top:461.54px;font-family:'Liberation Sans',sans-serif;font-size:12px;line-height:12px;color:#111;font-weight:700;white-space:nowrap;left:623.9px;transform-origin:0 0;transform:translateX(0.00px) scaleX(1.0475);">Politički subjekt</div><div style="position:absolute;top:461.54px;font-family:'Liberation Sans',sans-serif;font-size:12px;line-height:12px;color:#111;font-weight:700;white-space:nowrap;left:929.7px;transform-origin:0 0;transform:translateX(0.00px) scaleX(1.0218);">Broj glasova</div><div style="position:absolute;top:461.54px;font-family:'Liberation Sans',sans-serif;font-size:12px;line-height:12px;color:#111;font-weight:700;white-space:nowrap;left:1038px;transform-origin:0 0;transform:translateX(0.00px) scaleX(1.1245);">%</div><div style="position:absolute;left:368px;top:480px;width:703px;height:26px;background:#ebebeb;"></div><div style="position:absolute;left:368px;top:506px;width:703px;height:1px;background:#d6d6d6;"></div><div style="position:absolute;top:487.64px;font-family:'Liberation Sans',sans-serif;font-size:12px;line-height:12px;color:#111;font-weight:400;white-space:nowrap;left:373.9px;transform-origin:0 0;transform:translateX(0.00px) scaleX(0.9978);">00090</div><div style="position:absolute;top:487.64px;font-family:'Liberation Sans',sans-serif;font-size:12px;line-height:12px;color:#111;font-weight:400;white-space:nowrap;left:431px;transform-origin:0 0;transform:translateX(0.00px) scaleX(0.9382);">SDA-STRANKA DEMOKRATSKE AKCIJE</div><div style="position:absolute;top:487.64px;font-family:'Liberation Sans',sans-serif;font-size:12px;line-height:12px;color:#111;font-weight:400;white-space:nowrap;left:966.5px;transform-origin:0 0;transform:translateX(-17.91px) scaleX(1.0000);">11.948</div><div style="position:absolute;top:487.64px;font-family:'Liberation Sans',sans-serif;font-size:12px;line-height:12px;color:#111;font-weight:400;white-space:nowrap;left:1043.5px;transform-origin:0 0;transform:translateX(-15.02px) scaleX(1.0000);">30,84</div><div style="position:absolute;left:368px;top:507px;width:703px;height:26px;background:#ffffff;"></div><div style="position:absolute;left:368px;top:533px;width:703px;height:1px;background:#d6d6d6;"></div><div style="position:absolute;top:514.64px;font-family:'Liberation Sans',sans-serif;font-size:12px;line-height:12px;color:#111;font-weight:400;white-space:nowrap;left:373.9px;transform-origin:0 0;transform:translateX(0.00px) scaleX(0.9978);">01987</div><div style="position:absolute;top:514.64px;font-family:'Liberation Sans',sans-serif;font-size:12px;line-height:12px;color:#111;font-weight:400;white-space:nowrap;left:431px;transform-origin:0 0;transform:translateX(0.00px) scaleX(0.9284);">SNAGA CENTRA</div><div style="position:absolute;top:514.64px;font-family:'Liberation Sans',sans-serif;font-size:12px;line-height:12px;color:#111;font-weight:400;white-space:nowrap;left:966.5px;transform-origin:0 0;transform:translateX(-15.02px) scaleX(1.0000);">5.993</div><div style="position:absolute;top:514.64px;font-family:'Liberation Sans',sans-serif;font-size:12px;line-height:12px;color:#111;font-weight:400;white-space:nowrap;left:1043.5px;transform-origin:0 0;transform:translateX(-15.02px) scaleX(1.0000);">15,47</div><div style="position:absolute;left:368px;top:534px;width:703px;height:26px;background:#ebebeb;"></div><div style="position:absolute;left:368px;top:560px;width:703px;height:1px;background:#d6d6d6;"></div><div style="position:absolute;top:541.64px;font-family:'Liberation Sans',sans-serif;font-size:12px;line-height:12px;color:#111;font-weight:400;white-space:nowrap;left:373.9px;transform-origin:0 0;transform:translateX(0.00px) scaleX(1.0251);">01182</div><div style="position:absolute;top:541.64px;font-family:'Liberation Sans',sans-serif;font-size:12px;line-height:12px;color:#111;font-weight:400;white-space:nowrap;left:431px;transform-origin:0 0;transform:translateX(0.00px) scaleX(0.9286);">SBB - FAHRUDIN RADONČIĆ</div><div style="position:absolute;top:541.64px;font-family:'Liberation Sans',sans-serif;font-size:12px;line-height:12px;color:#111;font-weight:400;white-space:nowrap;left:966.5px;transform-origin:0 0;transform:translateX(-15.02px) scaleX(1.0000);">4.334</div><div style="position:absolute;top:541.64px;font-family:'Liberation Sans',sans-serif;font-size:12px;line-height:12px;color:#111;font-weight:400;white-space:nowrap;left:1043.5px;transform-origin:0 0;transform:translateX(-14.57px) scaleX(1.0000);">11,19</div><div style="position:absolute;left:368px;top:561px;width:703px;height:26px;background:#ffffff;"></div><div style="position:absolute;left:368px;top:587px;width:703px;height:1px;background:#d6d6d6;"></div><div style="position:absolute;top:568.64px;font-family:'Liberation Sans',sans-serif;font-size:12px;line-height:12px;color:#111;font-weight:400;white-space:nowrap;left:373.9px;transform-origin:0 0;transform:translateX(0.00px) scaleX(0.9978);">00008</div><div style="position:absolute;top:568.64px;font-family:'Liberation Sans',sans-serif;font-size:12px;line-height:12px;color:#111;font-weight:400;white-space:nowrap;left:431px;transform-origin:0 0;transform:translateX(0.00px) scaleX(0.9478);">SDP-SOCIJALDEMOKRATSKA PARTIJA BIH</div><div style="position:absolute;top:568.64px;font-family:'Liberation Sans',sans-serif;font-size:12px;line-height:12px;color:#111;font-weight:400;white-space:nowrap;left:966.5px;transform-origin:0 0;transform:translateX(-15.02px) scaleX(1.0000);">3.434</div><div style="position:absolute;top:568.64px;font-family:'Liberation Sans',sans-serif;font-size:12px;line-height:12px;color:#111;font-weight:400;white-space:nowrap;left:1043.5px;transform-origin:0 0;transform:translateX(-11.68px) scaleX(1.0000);">8,86</div><div style="position:absolute;left:368px;top:588px;width:703px;height:26px;background:#ebebeb;"></div><div style="position:absolute;left:368px;top:614px;width:703px;height:1px;background:#d6d6d6;"></div><div style="position:absolute;top:595.64px;font-family:'Liberation Sans',sans-serif;font-size:12px;line-height:12px;color:#111;font-weight:400;white-space:nowrap;left:373.9px;transform-origin:0 0;transform:translateX(0.00px) scaleX(0.9978);">01698</div><div style="position:absolute;top:595.64px;font-family:'Liberation Sans',sans-serif;font-size:12px;line-height:12px;color:#111;font-weight:400;white-space:nowrap;left:431px;transform-origin:0 0;transform:translateX(0.00px) scaleX(0.9469);">DEMOKRATSKA FRONTA</div><div style="position:absolute;top:595.64px;font-family:'Liberation Sans',sans-serif;font-size:12px;line-height:12px;color:#111;font-weight:400;white-space:nowrap;left:966.5px;transform-origin:0 0;transform:translateX(-15.02px) scaleX(1.0000);">2.633</div><div style="position:absolute;top:595.64px;font-family:'Liberation Sans',sans-serif;font-size:12px;line-height:12px;color:#111;font-weight:400;white-space:nowrap;left:1043.5px;transform-origin:0 0;transform:translateX(-11.68px) scaleX(1.0000);">6,80</div><div style="position:absolute;left:368px;top:615px;width:703px;height:26px;background:#ffffff;"></div><div style="position:absolute;left:368px;top:641px;width:703px;height:1px;background:#d6d6d6;"></div><div style="position:absolute;top:622.64px;font-family:'Liberation Sans',sans-serif;font-size:12px;line-height:12px;color:#111;font-weight:400;white-space:nowrap;left:373.9px;transform-origin:0 0;transform:translateX(0.00px) scaleX(0.9978);">00882</div><div style="position:absolute;top:622.64px;font-family:'Liberation Sans',sans-serif;font-size:12px;line-height:12px;color:#111;font-weight:400;white-space:nowrap;left:431px;transform-origin:0 0;transform:translateX(0.00px) scaleX(0.9665);">A-SDA STRANKA DEMOKRATSKE AKTIVNOSTI</div><div style="position:absolute;top:622.64px;font-family:'Liberation Sans',sans-serif;font-size:12px;line-height:12px;color:#111;font-weight:400;white-space:nowrap;left:966.5px;transform-origin:0 0;transform:translateX(-15.02px) scaleX(1.0000);">2.350</div><div style="position:absolute;top:622.64px;font-family:'Liberation Sans',sans-serif;font-size:12px;line-height:12px;color:#111;font-weight:400;white-space:nowrap;left:1043.5px;transform-origin:0 0;transform:translateX(-11.68px) scaleX(1.0000);">6,06</div><div style="position:absolute;left:368px;top:642px;width:703px;height:26px;background:#ebebeb;"></div><div style="position:absolute;left:368px;top:668px;width:703px;height:1px;background:#d6d6d6;"></div><div style="position:absolute;top:649.64px;font-family:'Liberation Sans',sans-serif;font-size:12px;line-height:12px;color:#111;font-weight:400;white-space:nowrap;left:373.9px;transform-origin:0 0;transform:translateX(0.00px) scaleX(0.9978);">00001</div><div style="position:absolute;top:649.64px;font-family:'Liberation Sans',sans-serif;font-size:12px;line-height:12px;color:#111;font-weight:400;white-space:nowrap;left:431px;transform-origin:0 0;transform:translateX(0.00px) scaleX(0.9176);">BPS-SEFER HALILOVIĆ</div><div style="position:absolute;top:649.64px;font-family:'Liberation Sans',sans-serif;font-size:12px;line-height:12px;color:#111;font-weight:400;white-space:nowrap;left:966.5px;transform-origin:0 0;transform:translateX(-15.02px) scaleX(1.0000);">1.503</div><div style="position:absolute;top:649.64px;font-family:'Liberation Sans',sans-serif;font-size:12px;line-height:12px;color:#111;font-weight:400;white-space:nowrap;left:1043.5px;transform-origin:0 0;transform:translateX(-11.68px) scaleX(1.0000);">3,88</div><div style="position:absolute;left:368px;top:669px;width:703px;height:26px;background:#ffffff;"></div><div style="position:absolute;left:368px;top:695px;width:703px;height:1px;background:#d6d6d6;"></div><div style="position:absolute;top:676.64px;font-family:'Liberation Sans',sans-serif;font-size:12px;line-height:12px;color:#111;font-weight:400;white-space:nowrap;left:373.9px;transform-origin:0 0;transform:translateX(0.00px) scaleX(0.9978);">00877</div><div style="position:absolute;top:676.64px;font-family:'Liberation Sans',sans-serif;font-size:12px;line-height:12px;color:#111;font-weight:400;white-space:nowrap;left:431px;transform-origin:0 0;transform:translateX(0.00px) scaleX(0.9562);">NAŠA STRANKA</div><div style="position:absolute;top:676.64px;font-family:'Liberation Sans',sans-serif;font-size:12px;line-height:12px;color:#111;font-weight:400;white-space:nowrap;left:966.5px;transform-origin:0 0;transform:translateX(-15.02px) scaleX(1.0000);">1.356</div><div style="position:absolute;top:676.64px;font-family:'Liberation Sans',sans-serif;font-size:12px;line-height:12px;color:#111;font-weight:400;white-space:nowrap;left:1043.5px;transform-origin:0 0;transform:translateX(-11.68px) scaleX(1.0000);">3,50</div><div style="position:absolute;left:368px;top:696px;width:703px;height:26px;background:#ebebeb;"></div><div style="position:absolute;left:368px;top:722px;width:703px;height:1px;background:#d6d6d6;"></div><div style="position:absolute;top:703.64px;font-family:'Liberation Sans',sans-serif;font-size:12px;line-height:12px;color:#111;font-weight:400;white-space:nowrap;left:373.9px;transform-origin:0 0;transform:translateX(0.00px) scaleX(0.9978);">00513</div><div style="position:absolute;top:703.64px;font-family:'Liberation Sans',sans-serif;font-size:12px;line-height:12px;color:#111;font-weight:400;white-space:nowrap;left:431px;transform-origin:0 0;transform:translateX(0.00px) scaleX(0.9455);">STRANKA PENZIONERA / UMIROVLJENIKA BOSNE I HERCEGOVINE</div><div style="position:absolute;top:703.64px;font-family:'Liberation Sans',sans-serif;font-size:12px;line-height:12px;color:#111;font-weight:400;white-space:nowrap;left:966.5px;transform-origin:0 0;transform:translateX(-15.02px) scaleX(1.0000);">1.082</div><div style="position:absolute;top:703.64px;font-family:'Liberation Sans',sans-serif;font-size:12px;line-height:12px;color:#111;font-weight:400;white-space:nowrap;left:1043.5px;transform-origin:0 0;transform:translateX(-11.68px) scaleX(1.0000);">2,79</div><div style="position:absolute;left:367px;top:480px;width:1px;height:243px;background:#d6d6d6;"></div><div style="position:absolute;left:426px;top:480px;width:1px;height:243px;background:#d6d6d6;"></div><div style="position:absolute;left:1017px;top:480px;width:1px;height:243px;background:#d6d6d6;"></div><div style="position:absolute;left:1071px;top:480px;width:1px;height:243px;background:#d6d6d6;"></div>
</body></html>
